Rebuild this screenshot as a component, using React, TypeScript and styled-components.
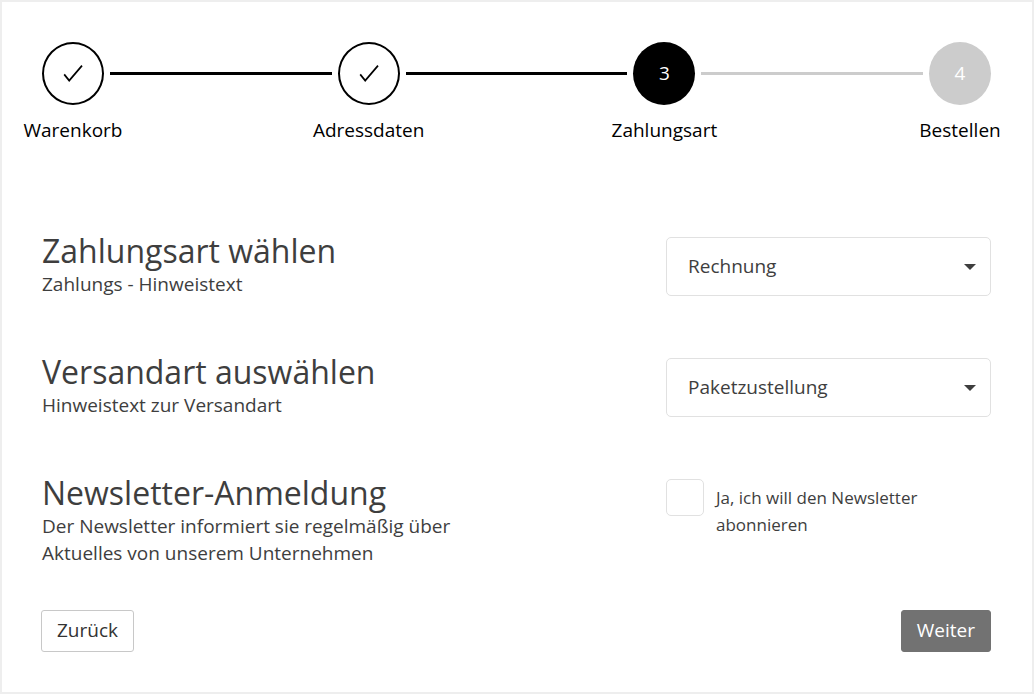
import React from "react";
import styled, { createGlobalStyle, css } from "styled-components";

const GlobalStyle = createGlobalStyle`
  *, *::before, *::after { box-sizing: border-box; }
  body {
    margin: 0;
    background: #fff;
    color: #3e3e3e;
    font-family: "Open Sans", "Noto Sans", sans-serif;
    font-size: 19px;
    line-height: 27px;
  }
`;

const Page = styled.main`
  min-height: 100vh;
  padding: 40px 41px 40px 39px;
  border: 2px solid #eee;
`;

const Stepper = styled.ol`
  display: flex;
  align-items: flex-start;
  gap: 6px;
  margin: 0 0 89px;
  padding: 0 0 0 1px;
  list-style: none;
`;

type StepState = "done" | "current" | "open";

const StepItem = styled.li<{ $first: boolean }>`
  display: flex;
  gap: 6px;
  flex: ${({ $first }) => ($first ? "none" : "1")};
`;

const Connector = styled.span<{ $active: boolean }>`
  flex: 1;
  height: 3px;
  margin-top: 30px;
  background: ${({ $active }) => ($active ? "#000" : "#ccc")};
`;

const Step = styled.div`
  display: flex;
  flex-direction: column;
  align-items: center;
  gap: 12px;
  width: 62px;
`;

const stepLook = {
  done: css`
    background: #fff;
    border: 2px solid #000;
    color: #000;
  `,
  current: css`
    background: #000;
    color: #fff;
  `,
  open: css`
    background: #ccc;
    color: #fff;
  `,
};

const StepCircle = styled.span<{ $state: StepState }>`
  display: flex;
  align-items: center;
  justify-content: center;
  width: 62px;
  height: 63px;
  border-radius: 50%;
  ${({ $state }) => stepLook[$state]}
`;

const StepLabel = styled.span`
  color: #000;
  white-space: nowrap;
`;

const Rows = styled.div`
  display: flex;
  flex-direction: column;
  gap: 56px;
`;

const Row = styled.div`
  display: grid;
  grid-template-columns: minmax(0, 1fr) 325px;
  gap: 32px;
`;

const Intro = styled.div`
  padding-left: 1px;
`;

const Heading = styled.h2`
  margin: 0 0 2px;
  font-size: 32px;
  font-weight: 400;
  line-height: 36px;
`;

const Hint = styled.p`
  max-width: 440px;
  margin: 0;
`;

const Field = styled.div`
  padding-top: 4px;
`;

const SelectBox = styled.div`
  display: grid;
  align-items: center;

  > * {
    grid-area: 1 / 1;
  }

  > svg {
    justify-self: end;
    margin-right: 15px;
    pointer-events: none;
  }
`;

const Select = styled.select`
  appearance: none;
  width: 100%;
  height: 59px;
  padding: 0 40px 0 21px;
  border: 1px solid #e1e1e1;
  border-radius: 5px;
  background: #fff;
  color: inherit;
  font: inherit;
`;

const CheckLabel = styled.label`
  display: flex;
  align-items: flex-start;
  gap: 12px;
  font-size: 17px;
`;

const Checkbox = styled.input`
  appearance: none;
  flex: none;
  width: 38px;
  height: 37px;
  margin: 0;
  border: 1px solid #e1e1e1;
  border-radius: 5px;
  background: #fff;

  &:checked {
    background: #727272;
  }
`;

const CheckText = styled.span`
  max-width: 220px;
  padding-top: 5px;
`;

const Actions = styled.div`
  display: flex;
  justify-content: space-between;
  padding-top: 43px;
`;

const Button = styled.button<{ $primary?: boolean }>`
  height: 42px;
  padding: 0 15px 2px;
  border: 1px solid ${({ $primary }) => ($primary ? "#727272" : "#c8c8c8")};
  border-radius: 3px;
  background: ${({ $primary }) => ($primary ? "#727272" : "#fff")};
  color: ${({ $primary }) => ($primary ? "#fff" : "#333")};
  font: inherit;
`;

const steps: { label: string; state: StepState }[] = [
  { label: "Warenkorb", state: "done" },
  { label: "Adressdaten", state: "done" },
  { label: "Zahlungsart", state: "current" },
  { label: "Bestellen", state: "open" },
];

const CheckIcon = () => (
  <svg width="22" height="20" viewBox="0 0 22 20" fill="none" stroke="currentColor" strokeWidth="1.7" aria-hidden="true">
    <path d="M2.2 10.4 7.2 16.6 20 1.6" />
  </svg>
);

const Caret = () => (
  <svg width="12" height="6" viewBox="0 0 12 6" aria-hidden="true">
    <path d="M0 0h12L6 6z" fill="#3e3e3e" />
  </svg>
);

export default function App() {
  return (
    <>
      <GlobalStyle />
      <Page>
        <Stepper>
          {steps.map(({ label, state }, index) => (
            <StepItem key={label} $first={index === 0} aria-current={state === "current" ? "step" : undefined}>
              {index > 0 && <Connector $active={state !== "open"} />}
              <Step>
                <StepCircle $state={state}>{state === "done" ? <CheckIcon /> : index + 1}</StepCircle>
                <StepLabel>{label}</StepLabel>
              </Step>
            </StepItem>
          ))}
        </Stepper>

        <form onSubmit={(event) => event.preventDefault()}>
          <Rows>
            <Row>
              <Intro>
                <Heading id="payment-title">Zahlungsart wählen</Heading>
                <Hint>Zahlungs - Hinweistext</Hint>
              </Intro>
              <Field>
                <SelectBox>
                  <Select aria-labelledby="payment-title" defaultValue="Rechnung">
                    <option>Rechnung</option>
                  </Select>
                  <Caret />
                </SelectBox>
              </Field>
            </Row>

            <Row>
              <Intro>
                <Heading id="shipping-title">Versandart auswählen</Heading>
                <Hint>Hinweistext zur Versandart</Hint>
              </Intro>
              <Field>
                <SelectBox>
                  <Select aria-labelledby="shipping-title" defaultValue="Paketzustellung">
                    <option>Paketzustellung</option>
                  </Select>
                  <Caret />
                </SelectBox>
              </Field>
            </Row>

            <Row>
              <Intro>
                <Heading>Newsletter-Anmeldung</Heading>
                <Hint>Der Newsletter informiert sie regelmäßig über Aktuelles von unserem Unternehmen</Hint>
              </Intro>
              <Field>
                <CheckLabel htmlFor="newsletter">
                  <Checkbox type="checkbox" id="newsletter" />
                  <CheckText>Ja, ich will den Newsletter abonnieren</CheckText>
                </CheckLabel>
              </Field>
            </Row>
          </Rows>

          <Actions>
            <Button type="button">Zurück</Button>
            <Button type="submit" $primary>Weiter</Button>
          </Actions>
        </form>
      </Page>
    </>
  );
}
